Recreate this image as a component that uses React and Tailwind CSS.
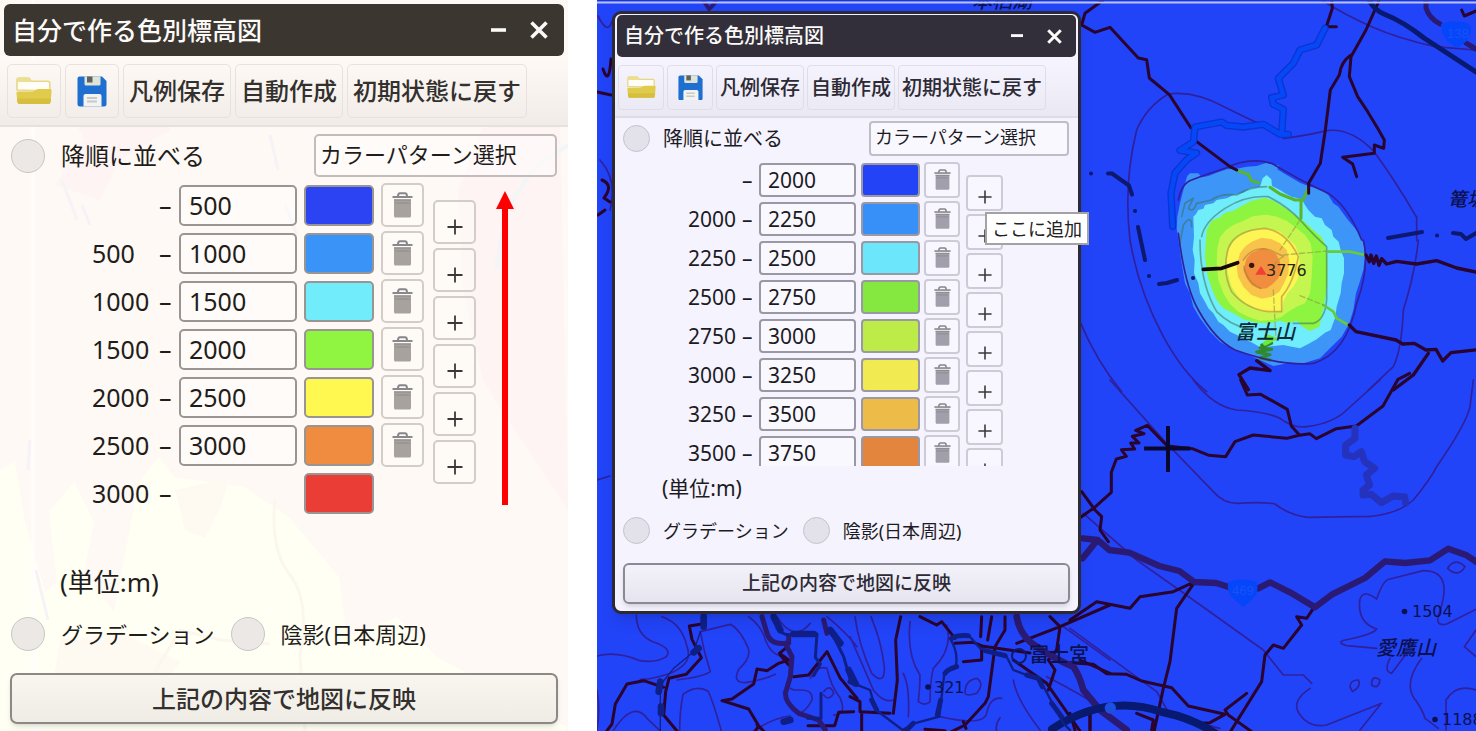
import React from "react";

const LARGE = {
  panel: "text-[#1f1d1b]",
  title: "mx-1 mt-1 h-[52px] rounded-[6px] bg-[#3b3630] pl-2 pr-4 text-[25px]",
  titleButtons: "gap-6",
  min: "w-[15px]",
  close: "w-[18px]",
  toolbar:
    "mt-1 h-[67px] gap-1 border-b-2 border-[#e6e1dc] bg-linear-to-b from-[#fef9f4] to-[#f1ece7] pl-[7px] pt-[4px]",
  tool: "h-[54px] rounded-[5px] border-[#e8e2dd] text-[24px] text-[#33302d]",
  toolIcon: "w-[54px]",
  toolText: "px-[5px]",
  folder: "w-[36px]",
  floppy: "w-[30px]",
  head: "mt-[7px] h-[43px] pl-[11px] pr-[11px]",
  circle: "size-[34px] border-[#c9c6c3] bg-[#ebe8e5]",
  order: "gap-4 text-[24px]",
  select: "h-[43px] w-[243px] rounded-[5px] border-[#c2bdba] pl-[4px] text-[22px]",
  list: "mt-[6px] gap-[9px] pl-[92px]",
  rows: "gap-1",
  row: "h-[44px] text-[25px]",
  from: "w-[67px]",
  dash: "w-[20px]",
  input: "h-[41px] w-[118px] rounded-[5px] border-[#999592] pl-[8px]",
  swatch: "ml-[7px] h-[41px] w-[70px] rounded-[5px] border-[#999592]",
  trash: "ml-[7px] h-[44px] w-[43px] rounded-[5px] border-[#d2cdc9]",
  trashIcon: "w-[21px] text-[#a8a29c]",
  plusCol: "gap-1 pt-[17px]",
  plus: "h-[44px] w-[43px] rounded-[5px] border-[#d2cdc9] pt-[10px]",
  plusIcon: "w-[16px]",
  unit: "mt-[50px] h-[34px] pl-[60px] text-[26px]",
  options: "mt-[18px] gap-4 pl-[11px] text-[22px]",
  option: "gap-4",
  apply:
    "mx-[10px] mb-[7px] mt-[22px] h-[51px] rounded-[7px] border-[#8b8885] bg-linear-to-b from-[#f8f6ee] to-[#efece6] text-[24px] text-[#33302d]",
};

const SMALL = {
  panel: "text-[#1c1b24]",
  title: "mx-[2px] mt-px h-[42px] rounded-[5px] bg-[#322f3a] pl-[7px] pr-[14px] text-[20px]",
  titleButtons: "gap-6",
  min: "w-[12px]",
  close: "w-[15px]",
  toolbar:
    "mt-[3px] h-[58px] gap-[3px] border-b-2 border-[#dedde6] bg-linear-to-b from-[#f6f4fe] to-[#eae8f2] pl-[3px] pt-[5px]",
  tool: "h-[45px] rounded-[4px] border-[#dfdde8] text-[20px] text-[#2c2a35]",
  toolIcon: "w-[46px]",
  toolText: "px-[3px]",
  folder: "w-[29px]",
  floppy: "w-[25px]",
  head: "mt-[3px] h-[35px] pl-2 pr-[9px]",
  circle: "size-[27px] border-[#c4c2cc] bg-[#e3e1ea]",
  order: "gap-[13px] text-[20px]",
  select: "h-[35px] w-[200px] rounded-[4px] border-[#bfbdc8] pl-[4px] text-[18px]",
  list: "mt-[6px] h-[304px] gap-[6px] overflow-hidden pl-[73px]",
  rows: "gap-[3px]",
  row: "h-[36px] text-[21px]",
  from: "w-[54px]",
  dash: "w-[17px]",
  input: "h-[34px] w-[97px] rounded-[4px] border-[#9a98a3] pl-[7px]",
  swatch: "ml-[5px] h-[34px] w-[59px] rounded-[4px] border-[#9a98a3]",
  trash: "ml-[4px] h-[36px] w-[36px] rounded-[4px] border-[#cdcbd5]",
  trashIcon: "w-[17px] text-[#a19fab]",
  plusCol: "gap-[3px] pt-[13px]",
  plus: "h-[36px] w-[37px] rounded-[4px] border-[#cdcbd5] pt-[8px]",
  plusIcon: "w-[14px]",
  unit: "mt-[8px] h-[28px] pl-[47px] text-[21px]",
  options: "mt-[15px] gap-[14px] pl-2 text-[18px]",
  option: "gap-[13px]",
  apply:
    "mx-2 mb-[7px] mt-[19px] h-[41px] rounded-[6px] border-[#8b8994] bg-linear-to-b from-[#f3f1fa] to-[#e6e4ee] text-[19px] text-[#2c2a35]",
};

const LARGE_ROWS = [
  ["", "500", "#2b43f3"],
  ["500", "1000", "#3a94f7"],
  ["1000", "1500", "#70ecfa"],
  ["1500", "2000", "#8ff540"],
  ["2000", "2500", "#fef850"],
  ["2500", "3000", "#ef8c40"],
  ["3000", null, "#ea3d35"],
];

const SMALL_ROWS = [
  ["", "2000", "#2244f6"],
  ["2000", "2250", "#3690f7"],
  ["2250", "2500", "#6ce6fb"],
  ["2500", "2750", "#84e841"],
  ["2750", "3000", "#bdeb48"],
  ["3000", "3250", "#f1ea50"],
  ["3250", "3500", "#ecbb48"],
  ["3500", "3750", "#e4853d"],
];

function FolderIcon({ className }) {
  return (
    <svg viewBox="0 0 36 28" className={className} aria-hidden="true">
      <path d="M1 13V3q0-2 2-2h9q1.500 0 2 1.500l.8 1.800h17q2 0 2 2V14z" fill="#fffdf5" stroke="#e6d885" strokeWidth="1.600" />
      <path d="M1 3q0-2 2-2h9q1.500 0 2 1.500l.8 2.500H1z" fill="#ecdf91" />
      <path d="M.4 16q0-1.500 1.500-1.500h14q2 0 3.200-1l1-.8q1-.7 2.500-.7H34q1.800 0 1.600 1.800l-1 11.200Q34.400 27 32.500 27h-29Q1.600 27 1.400 25z" fill="#e0cb4c" />
      <path d="M1 21.500h34l-.4 3.500q-.2 2-2.100 2h-29Q1.600 27 1.400 25z" fill="#d6bf3e" />
    </svg>
  );
}

function FloppyIcon({ className }) {
  return (
    <svg viewBox="0 0 30 31" className={className} aria-hidden="true">
      <path d="M2.500.5h22.500L29.500 5v23q0 2.500-2.500 2.500H3Q.5 30.500.5 28V2.500Q.5.500 2.500.5z" fill="#1f6fd0" />
      <path d="M7.500.5h16v7.500q0 1.500-1.500 1.500H9q-1.500 0-1.500-1.500z" fill="#dfe3d8" />
      <path d="M10 .5h5.500v6H10z" fill="#5c645c" />
      <path d="M6.500 30.500V20q0-2 2-2h14q2 0 2 2v10.500z" fill="#f3f3f1" />
      <path d="M10 22h10M10 25.500h10" stroke="#c9c9c9" strokeWidth="1.800" />
    </svg>
  );
}

function TrashIcon({ className }) {
  return (
    <svg viewBox="0 0 21 26" className={className} aria-hidden="true">
      <path d="M6 4.500Q6 1.200 8 1.200h5q2 0 2 3.300" fill="none" stroke="#88858a" strokeWidth="2" />
      <path d="M.5 4h20v2H.5z" fill="#8b888c" />
      <path d="M2 7.200h17V24q0 1.500-1.500 1.500h-14Q2 25.500 2 24z" fill="currentColor" />
      <path d="M2 8h17M3 11h15" stroke="#8f8c92" strokeWidth="1.200" />
    </svg>
  );
}

function PlusIcon({ className }) {
  return (
    <svg viewBox="0 0 16 16" className={className} aria-hidden="true">
      <path d="M8 .5v15M.5 8h15" stroke="#3a3838" strokeWidth="1.800" />
    </svg>
  );
}

function ReliefPanel({ s, rows, name }) {
  return (
    <form className={`relative flex flex-col ${s.panel}`} onSubmit={(e) => e.preventDefault()}>
      <header className={`flex items-center justify-between text-[#fbfaf8] ${s.title}`}>
        <h2 className="font-medium whitespace-nowrap">自分で作る色別標高図</h2>
        <div className={`flex items-center ${s.titleButtons}`}>
          <button type="button" aria-label="最小化">
            <svg viewBox="0 0 15 15" className={s.min} aria-hidden="true">
              <path d="M0 7h15" stroke="currentColor" strokeWidth="3.600" />
            </svg>
          </button>
          <button type="button" aria-label="閉じる">
            <svg viewBox="0 0 18 18" className={s.close} aria-hidden="true">
              <path d="M1.500 1.500l15 15M16.500 1.500l-15 15" stroke="currentColor" strokeWidth="3.600" />
            </svg>
          </button>
        </div>
      </header>

      <div className={`flex items-start ${s.toolbar}`}>
        <button type="button" aria-label="開く" className={`flex items-center justify-center border ${s.tool} ${s.toolIcon}`}>
          <FolderIcon className={s.folder} />
        </button>
        <button type="button" aria-label="保存" className={`flex items-center justify-center border ${s.tool} ${s.toolIcon}`}>
          <FloppyIcon className={s.floppy} />
        </button>
        {["凡例保存", "自動作成", "初期状態に戻す"].map((t) => (
          <button key={t} type="button" className={`border font-medium whitespace-nowrap ${s.tool} ${s.toolText}`}>
            {t}
          </button>
        ))}
      </div>

      <div className={`flex items-center justify-between ${s.head}`}>
        <label className={`flex items-center whitespace-nowrap ${s.order}`}>
          <input type="checkbox" className={`shrink-0 appearance-none rounded-full border ${s.circle}`} />
          降順に並べる
        </label>
        <select aria-label="カラーパターン" className={`appearance-none border-2 bg-white/40 pb-[3px] ${s.select}`}>
          <option>カラーパターン選択</option>
        </select>
      </div>

      <div className={`flex items-start ${s.list}`}>
        <div className={`flex flex-col ${s.rows}`}>
          {rows.map(([from, to, color]) => (
            <div key={from} className={`flex shrink-0 items-center ${s.row}`}>
              <span className={s.from}>{from}</span>
              <span className={s.dash}>–</span>
              {to ? (
                <input
                  type="text"
                  defaultValue={to}
                  aria-label={`${name} 上限 ${to}`}
                  className={`border-2 bg-white/40 ${s.input}`}
                />
              ) : (
                <span className={`invisible border-2 ${s.input}`} />
              )}
              <button
                type="button"
                aria-label="色を選ぶ"
                className={`border-2 ${s.swatch}`}
                style={{ backgroundColor: color }}
              />
              {to && (
                <button type="button" aria-label="削除" className={`flex items-center justify-center border-2 bg-white/30 ${s.trash}`}>
                  <TrashIcon className={s.trashIcon} />
                </button>
              )}
            </div>
          ))}
        </div>
        <div className={`flex flex-col ${s.plusCol}`}>
          {rows
            .filter((r) => r[1])
            .map((r) => (
              <button key={r[1]} type="button" aria-label="ここに追加" className={`flex shrink-0 items-center justify-center border-2 bg-white/30 ${s.plus}`}>
                <PlusIcon className={s.plusIcon} />
              </button>
            ))}
        </div>
      </div>

      <p className={`flex items-center ${s.unit}`}>(単位:m)</p>

      <div className={`flex items-center whitespace-nowrap ${s.options}`}>
        {["グラデーション", "陰影(日本周辺)"].map((t) => (
          <label key={t} className={`flex items-center ${s.option}`}>
            <input type="checkbox" className={`shrink-0 appearance-none rounded-full border ${s.circle}`} />
            {t}
          </label>
        ))}
      </div>

      <button type="submit" className={`border-2 font-medium shadow-md ${s.apply}`}>
        上記の内容で地図に反映
      </button>
    </form>
  );
}

function PaleMap() {
  return (
    <svg className="absolute inset-0 size-full" viewBox="0 0 568 731" preserveAspectRatio="xMidYMid slice" aria-hidden="true">
      <rect width="568" height="731" fill="#fef9f4" />
      <path d="M0 470l15-8 10 60 20 70 12-10-8-70 25-30 20 40-10 50 30 40 25-130 20-25 15 20 70 10 45 30 50 60 8 60 50-20 40 40 130 70v74H0z" fill="#fffff4" />
      <path d="M175 490l10 40 20 8 15-30 10-30zM60 640l60-8 60 30-30 40-100 0z" fill="#fef9f1" />
      <path d="M490 110l70 15 8 385-60-90-25-40-20-90-5-100z" fill="#fdf4f3" />
      <path d="M100 75l50 15 20 40-50 30-20 40-45-15 30-45-20-35z" fill="#fdf4f3" />
      <path d="M270 135l8 35M285 205l12 30M62 180l15 40M82 205l8 20M30 440l-2 30M36 570l12 50" fill="none" stroke="#f5f3f7" strokeWidth="3" />
      <path d="M568 145l-30 20-12 15-20 30-10 60" fill="none" stroke="#f3f6f6" strokeWidth="4" />
      <path d="M275 500q-5 50 15 75t10 80l5 76M150 680l30-50 40 10 50 4" fill="none" stroke="#fcf7ee" strokeWidth="3" />
      <path d="M33 0v731" stroke="#fffefc" strokeWidth="3" />
    </svg>
  );
}

const JA = "'Noto Sans CJK JP', sans-serif";

function ReliefMap() {
  return (
    <svg
      className="absolute inset-0 size-full"
      viewBox="597 0 879 731"
      preserveAspectRatio="xMinYMin slice"
      aria-hidden="true"
      fill="none"
      strokeLinejoin="round"
      strokeLinecap="round"
    >
      <rect x="597" width="1200" height="731" fill="#2244f8" />

      {/* elevation bands */}
      <g transform="translate(1070 150) scale(.33333)">
        <path d="M348 90L352 78 360 70 385 70 395 82 415 78 440 68 470 58 500 56 530 50 560 48 590 38 612 45 627 46 622 58 650 75 690 98 720 110 745 115 775 135 790 160 805 170 830 205 855 235 870 255 882 285 885 320 880 360 868 400 858 430 850 480 838 520 815 560 780 595 750 625 700 640 660 638 610 648 570 630 530 612 490 600 450 575 420 545 390 505 370 470 360 430 345 400 335 340 328 290 320 235 322 200 330 160 340 120z" fill="#3c95f7" />
        <path d="M370 200L378 192 385 180 400 176 405 165 430 160 440 150 470 145 490 135 520 128 540 115 570 110 578 85 590 75 604 88 606 108 630 120 645 130 665 140 695 148 705 165 715 180 735 200 755 205 765 225 785 240 790 260 806 275 812 300 822 325 822 370 815 400 812 430 800 470 795 505 782 540 765 548 740 568 715 582 690 595 665 590 640 585 610 588 570 592 550 580 515 562 480 545 460 525 445 515 430 490 415 475 405 455 390 430 385 400 372 370 374 330 368 300 372 260z" fill="#70edfb" />
        <path d="M410 240L425 212 450 202 465 188 490 182 520 165 545 152 585 143 610 152 640 170 680 198 700 212 730 240 755 262 768 290 772 330 772 400 765 450 755 500 748 530 720 543 695 528 680 512 655 520 630 512 600 520 560 518 520 508 490 490 460 475 440 450 425 415 412 375 405 320 407 280z" fill="#8df43f" />
        <path d="M450 262L468 240 490 225 520 212 550 198 590 194 620 200 650 212 680 235 705 255 722 280 728 320 725 380 720 430 705 460 680 470 655 485 635 500 610 510 570 512 535 500 505 485 480 462 460 430 445 390 440 340 442 295z" fill="#c5f650" />
        <path d="M474 300L490 275 510 258 535 245 565 235 600 236 630 245 650 262 675 285 687 315 690 350 684 385 670 410 652 430 640 455 636 482 600 488 565 480 530 462 505 440 485 410 474 370 470 330z" fill="#fdf553" />
        <path d="M510 310L525 290 545 275 575 263 605 268 630 280 650 300 658 330 655 370 642 400 628 425 605 440 575 446 545 435 520 410 504 380 500 345z" fill="#f8c24b" />
        <path d="M530 325L545 308 565 300 580 293 600 302 618 312 630 335 633 360 625 385 608 402 590 415 570 417 545 405 530 385 520 360z" fill="#f18d3e" />
        <g stroke="#3f6f57" strokeOpacity=".55" strokeWidth="5">
          <path d="M395 260q8-45 70-85t130-35q60 30 100 75t75 75v160q-5 60-40 70h-60M390 270q0 130 50 215 40 40 90 50" />
          <path d="M475 295q20-55 110-60 65 10 100 85-15 80-50 120v45h-40q-70-10-110-60-30-60-10-130zM520 330q30-45 80-30l38 18M522 350q10 50 50 65" stroke="#a97c38" />
          <path d="M590 110q-50 0-90 25-50-5-75 15l-45 10q-10 30-25 15l15-30-25 15-10 40M330 280l10-55q25-35 25 5" />
        </g>
        <path d="M505 63l30 10 10 20 20 5M600 112l30 20 45 18h25l14-35M693 150v55" stroke="#59b52b" strokeWidth="9" />
        <path d="M770 305h70l45 10M760 465l30 20 10 20 35 20" stroke="#66c93f" strokeWidth="8" />
        <path d="M690 210l-60 90M640 315l130-12M690 437l70 28M610 420l8 150M640 320q-20 10-30 30" stroke="#8da048" strokeOpacity=".65" strokeWidth="4" strokeDasharray="16 8" />
        <path d="M575 585l30-5-35 14 35 4-45 8 40 8-30 10 30 6" stroke="#2f8a2c" strokeWidth="9" />
        <path d="M590 560l20 6-24 14" stroke="#6fe83c" strokeWidth="14" />
        <path d="M400 358l55-3 48-17" stroke="#160808" strokeWidth="11" />
        <path d="M556 374l17-26 17 26z" fill="#ee4036" />
        <circle cx="545" cy="346" r="8" fill="#35160d" />
      </g>

      {/* contour lines */}
      <g stroke="#30209c">
        <g transform="translate(1070 0) scale(.33333)" strokeWidth="5">
          <path d="M755 0q70 45 150 80t190 60l120 10M180 720q-20-170 20-330 30-70 95-108 80-10 170 40 60 30 100 48M640 415q70-8 130-23 70-10 140 60 60 80 130 200v70" />
          <path d="M325 600q10-50 40-60 40-15 100-35 70-35 140-15 90 55 170 90 60 40 100 140" />
        </g>
        <g transform="translate(1070 150) scale(.33333)" strokeWidth="5">
          <path d="M180 270q25 150 100 290 60 110 130 165M325 250q20 160 60 230 50 90 110 120 140 50 235 40 100-30 130-180 40-110 20-190M1045 270q-10 100-45 210-5 120-30 170l-75 70M30 515q50 120 125 210" />
        </g>
        <g transform="translate(1070 380) scale(.33333)" strokeWidth="5">
          <path d="M120 0l170 190 140 145q30 35 70 35 80-5 115 2 45 35 100 40 130-3 180-2 90-8 135-50 50-60 70-100 90-130 100-180l10-80M370 0q60 80 130 90 90 5 130 25 40 30 80 25 80-10 120-50l100-90M40 400l160 140 170 120 210 150q40 50 60 75l60 0 25 25M0 745l260 190 40 70 150 40" />
          <path d="M720 925q-60 40-30 80 30 40 80 30l165-65M920 805l-90-8q-40-12 10-20 70-15 80-30-60-20-50-90 10-30 50 0 20-60 40-60l100-25q90 0 50 120-20 50 20 40l90-45 38 20M1140 555q20-20 45 5-20 35-52 5zM840 920q0-20 25-20 10 20-18 35zM905 905q5-20 25-5-5 30-25 15zM960 835q-20 40 5 45l45-60M1055 835q-60 80-15 130 20 30 25 50l40 30M1218 750l-35 50 35 30M1218 930q-60-20-90 30v90M870 1050l60-75" />
        </g>
        <g transform="translate(597 600) scale(.33333)" strokeWidth="5">
          <path d="M118 45q0 60 50 80 60 20 40 45-30 20-80 12-70-30-128-14M195 50q60 20 75 90 20 50-50 80-60 20-90 18M310 95l90-22q30 15 55 75 5 30-30 60-20 40 20 40 60-10 90-25M310 95q10 60 30 120-20 15-100 25M248 393q0-60 10-110 40-30 75-10 15 30 40 120M50 390q60-90 100-35l40 38M455 50q40 30 50 70 20 50 60 50M590 270q-20-10 0 0l20 0q40 0 35 30-20 40-45 40M680 275q20-25 30 5-15 25-30 5M640 235q20-40 50-30 10 50 40 90 20 50-20 50M470 393q60-40 110-45M540 50q50 80 100 20M690 50q60 50 90 90M0 270q10 60 0 120" />
        </g>
        <g transform="translate(850 600) scale(.33333)" strokeWidth="5">
          <path d="M15 50q10 80 50 170 40 40 38-20-10-80-40-150M0 110q40 90 70 160 30 40 60 30M180 65q-10 100 30 160 0 40-5 80 20 15 35 0 0-60 10-100 60-60 40-130M160 220q20 40 15 130M345 280q0-40 35-45 25 15 0 45-30 10-35 0zM270 350q130 30 140-10 10-50 45-45M440 393q-5-20 10-40M490 240q10 60 80 150M640 80l140 100M590 230q100 50 190 110" />
        </g>
        <path d="M600 160q18 20 10 50M598 16q10 20 14 5M597 480l13-4" strokeWidth="1.700" />
      </g>

      {/* dark trails */}
      <g stroke="#28042e">
        <g transform="translate(1070 0) scale(.33333)" strokeWidth="9">
          <path d="M100 0L45 40 35 75l40 22 45-15 85 92 25 5 8 55 60 50 65 100M380 425l100 75 20 10M785 0l2 25-18 55h30M928 0l-40 90-45 80-5 60 25 60 30 45 30 50 20 35-2 25-28-10v25l-95 12 30 20 12 38M843 165q-30 20-35 60l-27 45-15 120-15 100-35 60v30" />
          <path d="M1175 30l8 18 35-15" />
        </g>
        <g transform="translate(1070 150) scale(.33333)" strokeWidth="10">
          <path d="M888 315l10 20 5-20 8 25 8-22 8 28 8-20 15 16 30-8 60 8 60-10 60 22 58 12M838 525l20 20 120 25 20 12 35-2 35 20 30-2 20 35 25-25 90-10M1075 610l-45 65-60 45M560 632l40 30-60-8-33 20 28 45" />
        </g>
        <g transform="translate(1070 380) scale(.33333)" strokeWidth="9">
          <path d="M512 0l20 45 40-2 80 45 12 50 25 28 30-5 20 15 60-30 60-8 80-60 45-80 35-18M690 165l-40 10-100-10-55 20-28 45-50-4-50-20-75-8-60-62-35 15 25 10-35 8 20 20-25 0 12 18-40 2 15 20-30 8-15 40v60l-50 45-70 50M35 335l40 55 20 20-5 40 25 35M0 720l80-55 100 20 30-35 100-15 65-30-55 80-20 160-20 80-30 140M730 685l-20 30-30-5 15 25-55 70-30-10-25 30-10 80-100 160-50 60M0 848l70 5 40 28 60 2 45 20 90 20 50 55 110 25-45 25-50 3M530 940l-65 50 10 15 70 50M0 1000l15 50M60 1000v50M200 1000l50 20-5 30" />
        </g>
        <g transform="translate(597 600) scale(.33333)" strokeWidth="9">
          <path d="M315 72l-38 6 8 40 28 55-45 50-52 12-10 40-6 70 40 48M200 262l-60-20-50 10-35 60-10 60-15 20M375 302l30-5 65-45 10-45 30 5 35-22 30-10-28-20 25-20M550 165l25 30M375 302l80 25 30 50-10 16M590 230l45-5 55-70 40 80 50 60M770 335l-45 2-12 40-80 0M500 393l-20-20" />
        </g>
        <g transform="translate(850 600) scale(.33333)" strokeWidth="9">
          <path d="M152 50l-15 70 5 120-12 100M0 290l30 15 0 30 90 5M35 335l0 58M210 50l50 25 15-10 40 50M315 130l55-3 30 12 140 20M395 50l-3 60M425 50l-12 70M465 50l0 40-30 50-20 150-10 20-60 65-40 20M395 145v35l-55 5M500 130l130-50L780 15M600 50l30 30-10 70-25 30 20 30-20 60M490 180l100 70 100 143M720 340v50M225 388l60 4M340 365l8 20M690 180l90 40" />
        </g>
        <path d="M597 92l14 3M603 69q6 18 8-10M602 180q12 5 2 18l6 4M598 215l7-5" strokeWidth="3" />
      </g>

      {/* main roads */}
      <g stroke="#2b1a73">
        <g transform="translate(1070 380) scale(.33333)" strokeWidth="19">
          <path d="M38 475l45 5 35 30 60 8 90 40 60 15 45 33 65 3 70 22M565 625l35-18 60 30 75 45 50-38 100-50 60-50 60 5 75-8 55-35 55 20 30 20M38 535l40-50" />
        </g>
        <g transform="translate(597 600) scale(.33333)" strokeWidth="15">
          <path d="M495 50l15 50q10 35 55 30l20 40-5 60-15 50q0 30 40 60l60 20 20 30M575 130V110M680 60l10 40" />
        </g>
        <g transform="translate(850 600) scale(.33333)" strokeWidth="20">
          <path d="M500 50q10 60 60 90 60 40 110 60 20 30 30 70l50 60 80 60" />
        </g>
        <path d="M1426 0v8q3 10 14 16M1466 43l10 6" strokeWidth="5" />
        <path d="M703 0l6 9q6-5 7-9" strokeWidth="4" />
      </g>

      {/* expressway and railway */}
      <g stroke="#071a70">
        <path d="M1369 0q5 10 15 14 20 8 40 24l52 34" strokeWidth="5" />
        <path d="M1052 729q55-36 110-17 30 6 53 21" strokeWidth="8" />
        <g transform="translate(597 600) scale(.33333)" stroke="#0f1f86">
          <path d="M320 50v30M305 145l-15 12M190 245l-5 30M192 320v20" strokeWidth="20" />
          <path d="M310 95l-20 60-60 50-40 50v138" strokeWidth="4" />
          <path d="M530 50l20 40M590 102l60 0M700 90l30 40M755 210l20 40M560 365l20-5" strokeWidth="20" />
          <path d="M540 85q20 25 50 17h70l-5 70 15 20-20 35M700 90l40 80 20 70M672 280v75h-40" strokeWidth="9" />
        </g>
        <g transform="translate(850 600) scale(.33333)" stroke="#0f1f86">
          <path d="M305 115q15-10 50-8M405 152l60 15M320 200q-30 10-35 20M272 300l-10 45M65 300l15 30M0 245l20 8M530 225l35 10 12 25M605 310l30 40M190 370l-20 20" strokeWidth="15" />
          <path d="M300 115q25 40 18 80l-35 25-15 130-75 20-35 20-80-60-18-60-50-20M360 110l30 35 80 25 20 40 80 30 70 130 20 20" strokeWidth="7" />
        </g>
      </g>

      {/* rivers and forest road */}
      <g transform="translate(1070 0) scale(.33333)">
        <path d="M765 85l-25 50-50 15-20 40-45 45 15 50-35 8 5 20 30 15-5 75M655 403h-25l-50-30-60 8-50-5-15-10-80 15-5 45-40 25 50 8-30 20-35 40-12 60 5 100" stroke="#0a35d0" strokeWidth="22" />
        <path d="M765 85l-25 50-50 15-20 40-45 45 15 50-35 8 5 20 30 15-5 75M655 403h-25l-50-30-60 8-50-5-15-10-80 15-5 45-40 25 50 8-30 20-35 40-12 60 5 100" stroke="#0648f8" strokeWidth="14" />
      </g>
      <g transform="translate(1070 380) scale(.33333)">
        <path d="M855 145v30l-28 20 0 30 25 5 22-15 10 30 30 20-25 20 10 30-20 15v15l25-2 30 25 35-20 35 2 3 20" stroke="#2432bd" strokeWidth="21" />
        <path d="M475 605q40-15 85 0 10 35-15 55l-25 22-25-22q-28-20-20-55z" fill="#0546fb" />
        <circle cx="121" cy="984" r="17" fill="#1d50e0" />
      </g>
      <path d="M1441 24q8-4 16-2 9-1 14 4 1 8-4 15l-10 7-10-7q-6-8-6-17z" fill="#0546fb" />

      {/* prefecture boundary */}
      <path
        d="M1091 173.500h.1M1108 173.500h4l17 12 3 9M1135 211h.1M1138 227l7 33M1149 276h.1M1159 284l8-1 10-3M1193 278h.1M1388 238l34-6M1437 235.500h.1M1453 233l8 1 5 5 12-7"
        stroke="#0d1970"
        strokeWidth="4"
      />

      {/* centre cross */}
      <path d="M1144 448.500h46M1168 426v46" stroke="#08082c" strokeWidth="4" strokeLinecap="butt" />

      <g fill="#0b1050" fontFamily={JA} fontSize="20" fontWeight="500" fontStyle="italic">
        <text x="1235" y="339" fill="#0c2c35">富士山</text>
        <text x="1376" y="655">愛鷹山</text>
        <text x="1448" y="206" fontSize="19">篭坂</text>
        <text x="972" y="8">本栖湖</text>
      </g>
      <text x="1029" y="662" fill="#0b1050" fontFamily={JA} fontSize="20" fontWeight="500">富士宮</text>
      <g fill="#0b1050" fontFamily="'DejaVu Sans', sans-serif" fontSize="16">
        <text x="1266" y="276" fill="#2d2414">3776</text>
        <text x="1412" y="617">1504</text>
        <text x="1442" y="725">1188</text>
        <text x="934" y="693">321</text>
        <circle cx="1404.500" cy="611.500" r="2.800" />
        <circle cx="1435" cy="719.500" r="2.800" />
        <circle cx="928" cy="687" r="2.800" />
      </g>
      <circle cx="1019" cy="656" r="7" stroke="#0b1a70" strokeWidth="2" />
      <g fill="#1a52f4" fontFamily="'Liberation Sans', sans-serif" fontSize="13">
        <text x="1232" y="595">469</text>
        <text x="1447" y="38">138</text>
      </g>

      <path d="M597 .5h1200" stroke="#1b39c8" />
      <path d="M597 2.500h1200" stroke="#b9c1f5" strokeWidth="2" />
    </svg>
  );
}

export default function App() {
  return (
    <main className="flex min-h-screen gap-[29px] bg-white font-['Noto_Sans','Noto_Sans_CJK_JP',sans-serif] leading-none">
      <section className="relative w-[568px] shrink-0 overflow-hidden">
        <PaleMap />
        <ReliefPanel s={LARGE} rows={LARGE_ROWS} name="標高" />
        <svg viewBox="0 0 18 314" className="absolute left-[496px] top-[191px] w-[18px]" aria-hidden="true">
          <path d="M9 0l9 18h-6v296H6V18H0z" fill="#ff0000" />
        </svg>
      </section>

      <section className="relative min-w-0 flex-1 overflow-hidden pl-[15px] pt-[11px]">
        <ReliefMap />
        <div className="relative w-[469px] rounded-[9px] border-[3px] border-[#2b2a35] bg-[#f5f3fe] shadow-lg">
          <ReliefPanel s={SMALL} rows={SMALL_ROWS} name="標高図" />
          <div
            role="tooltip"
            className="absolute left-[370px] top-[198px] flex h-[33px] items-center whitespace-nowrap border-2 border-[#a3a3a3] bg-white px-[5px] text-[18px] text-[#222]"
          >
            ここに追加
          </div>
        </div>
      </section>
    </main>
  );
}
